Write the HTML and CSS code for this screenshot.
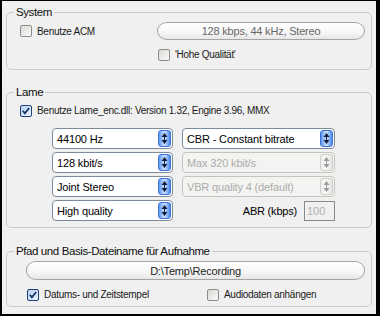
FILE: index.html
```html
<!DOCTYPE html>
<html lang="de">
<head>
  <meta charset="UTF-8" />
  <title>Aufnahme-Einstellungen</title>
  <link rel="stylesheet" href="styles.css">
</head>
<body>

  <div class="dialog">

    <fieldset class="group group-system">
      <legend>System</legend>
      <div class="system-grid">
        <label class="check"><span class="box"></span>Benutze ACM</label>
        <div class="pill pill-info">128 kbps, 44 kHz, Stereo</div>
        <span></span>
        <label class="check check-hq"><span class="box"></span>'Hohe Qualität'</label>
      </div>
    </fieldset>

    <fieldset class="group group-lame">
      <legend>Lame</legend>
      <label class="check">
        <span class="box checked"><svg viewBox="0 0 11 11"><path d="M2 5.2 L4.3 8 L9 2.2" /></svg></span>
        Benutze Lame_enc.dll: Version 1.32, Engine 3.96, MMX
      </label>

      <div class="combo-grid">
        <div class="combo">
          <span class="combo-text">44100 Hz</span>
          <span class="combo-btn"><svg viewBox="0 0 7 13"><path d="M3.5 1 L6.5 5 L0.5 5 Z M0.5 8 L6.5 8 L3.5 12 Z" /><rect x="3" y="4" width="1" height="5" /></svg></span>
        </div>
        <div class="combo">
          <span class="combo-text">CBR - Constant bitrate</span>
          <span class="combo-btn"><svg viewBox="0 0 7 13"><path d="M3.5 1 L6.5 5 L0.5 5 Z M0.5 8 L6.5 8 L3.5 12 Z" /><rect x="3" y="4" width="1" height="5" /></svg></span>
        </div>

        <div class="combo">
          <span class="combo-text">128 kbit/s</span>
          <span class="combo-btn"><svg viewBox="0 0 7 13"><path d="M3.5 1 L6.5 5 L0.5 5 Z M0.5 8 L6.5 8 L3.5 12 Z" /><rect x="3" y="4" width="1" height="5" /></svg></span>
        </div>
        <div class="combo disabled">
          <span class="combo-text">Max 320 kbit/s</span>
          <span class="combo-btn"><svg viewBox="0 0 7 13"><path d="M3.5 1 L6.5 5 L0.5 5 Z M0.5 8 L6.5 8 L3.5 12 Z" /><rect x="3" y="4" width="1" height="5" /></svg></span>
        </div>

        <div class="combo">
          <span class="combo-text">Joint Stereo</span>
          <span class="combo-btn"><svg viewBox="0 0 7 13"><path d="M3.5 1 L6.5 5 L0.5 5 Z M0.5 8 L6.5 8 L3.5 12 Z" /><rect x="3" y="4" width="1" height="5" /></svg></span>
        </div>
        <div class="combo disabled">
          <span class="combo-text">VBR quality 4 (default)</span>
          <span class="combo-btn"><svg viewBox="0 0 7 13"><path d="M3.5 1 L6.5 5 L0.5 5 Z M0.5 8 L6.5 8 L3.5 12 Z" /><rect x="3" y="4" width="1" height="5" /></svg></span>
        </div>

        <div class="combo">
          <span class="combo-text">High quality</span>
          <span class="combo-btn"><svg viewBox="0 0 7 13"><path d="M3.5 1 L6.5 5 L0.5 5 Z M0.5 8 L6.5 8 L3.5 12 Z" /><rect x="3" y="4" width="1" height="5" /></svg></span>
        </div>
        <div class="abr">
          <span class="abr-label">ABR (kbps)</span>
          <span class="abr-input">100</span>
        </div>
      </div>
    </fieldset>

    <fieldset class="group group-path">
      <legend>Pfad und Basis-Dateiname für Aufnahme</legend>
      <div class="pill pill-path">D:\Temp\Recording</div>
      <div class="path-checks">
        <label class="check check-date">
          <span class="box checked"><svg viewBox="0 0 11 11"><path d="M2 5.2 L4.3 8 L9 2.2" /></svg></span>
          Datums- und Zeitstempel
        </label>
        <label class="check"><span class="box"></span>Audiodaten anhängen</label>
      </div>
    </fieldset>

  </div>

</body>
</html>
```

FILE: styles.css
```css
body {
  margin: 0;
  background-color: #000;
  font-family: "Liberation Sans", Arial, sans-serif;
  color: #000;
}

.dialog {
  width: 366px;
  height: 309px;
  margin: 1px 0 0 2px;
  padding: 4px 4px 0 4px;
  background-color: #f0f0f0;
}

.group {
  margin: 0;
  padding: 3px 6px 8px 13px;
  min-width: 0;
  border: 1px solid #cbcbc3;
  border-radius: 5px;
}

.group legend {
  margin-left: -6px;
  padding: 0 2px;
  font-size: 11.5px;
  line-height: 14px;
  letter-spacing: -0.4px;
  color: #111;
}

.group-lame {
  margin-top: 15px;
  padding-top: 5px;
  padding-bottom: 6px;
}

.group-path {
  margin-top: 16px;
  padding-bottom: 5px;
}

/* checkboxes */
.check {
  display: flex;
  align-items: center;
  gap: 5px;
  height: 13px;
  font-size: 10px;
  letter-spacing: -0.3px;
  color: #1a1a1a;
  white-space: nowrap;
}

.box {
  flex: none;
  width: 10px;
  height: 10px;
  border: 1px solid #8c8c8c;
  border-radius: 2px;
  background: linear-gradient(135deg, #d8d8d2, #fbfbfb);
}

.box.checked {
  border-color: #1d3f7c;
  background: linear-gradient(135deg, #b9d0ef, #eef4fd);
}

.box svg {
  display: block;
  width: 10px;
  height: 10px;
  fill: none;
  stroke: #16306a;
  stroke-width: 2;
}

/* system */
.system-grid {
  display: grid;
  grid-template-columns: 137px 208px;
  row-gap: 8px;
  align-items: center;
}

.check-hq {
  margin-left: 1px;
}

.pill {
  display: flex;
  align-items: center;
  justify-content: center;
  border: 1px solid #a4a4a4;
  border-radius: 10px / 9px;
  background: linear-gradient(#ffffff, #f6f6f6 60%, #e6e6e6);
  font-size: 11px;
  letter-spacing: -0.2px;
}

.pill-info {
  height: 16px;
  color: #666;
}

.pill-path {
  height: 17px;
  margin-left: 6px;
  color: #222;
}

/* lame */
.combo-grid {
  display: grid;
  grid-template-columns: 121px 153px;
  grid-auto-rows: 21px;
  gap: 3px 9px;
  margin: 11px 0 0 32px;
}

.combo {
  display: flex;
  align-items: center;
  border: 1px solid #7d8c9c;
  border-radius: 4px;
  background-color: #fff;
}

.combo-text {
  flex: 1;
  padding-left: 4px;
  font-size: 11px;
  letter-spacing: -0.15px;
  white-space: nowrap;
  overflow: hidden;
}

.combo-btn {
  display: flex;
  align-items: center;
  justify-content: center;
  width: 13px;
  height: 17px;
  margin-right: 1px;
  border: 1px solid #3f72cc;
  border-radius: 3px;
  box-sizing: border-box;
  background: linear-gradient(90deg, #5b9af2, #cfe2fe 50%, #4a8bef);
}

.combo-btn svg {
  width: 7px;
  height: 13px;
  fill: #16203a;
}

.combo.disabled {
  border-color: #c4c4bc;
  background-color: #f3f3f1;
}

.combo.disabled .combo-text {
  color: #acacac;
}

.combo.disabled .combo-btn {
  border-color: #d0d0ca;
  background: linear-gradient(90deg, #ececec, #fafafa 45%, #e4e4e4);
}

.combo.disabled .combo-btn svg {
  fill: #9c9c9c;
}

.abr {
  display: flex;
  align-items: center;
  justify-content: flex-end;
  gap: 7px;
}

.abr-label {
  font-size: 11px;
  letter-spacing: -0.2px;
}

.abr-input {
  width: 27px;
  height: 18px;
  padding-left: 2px;
  border: 1px solid #8a8a8a;
  font-size: 11px;
  line-height: 18px;
  color: #b0b0b0;
}

/* pfad */
.path-checks {
  display: flex;
  margin: 8px 0 0 7px;
}

.check-date {
  width: 180px;
}
```
